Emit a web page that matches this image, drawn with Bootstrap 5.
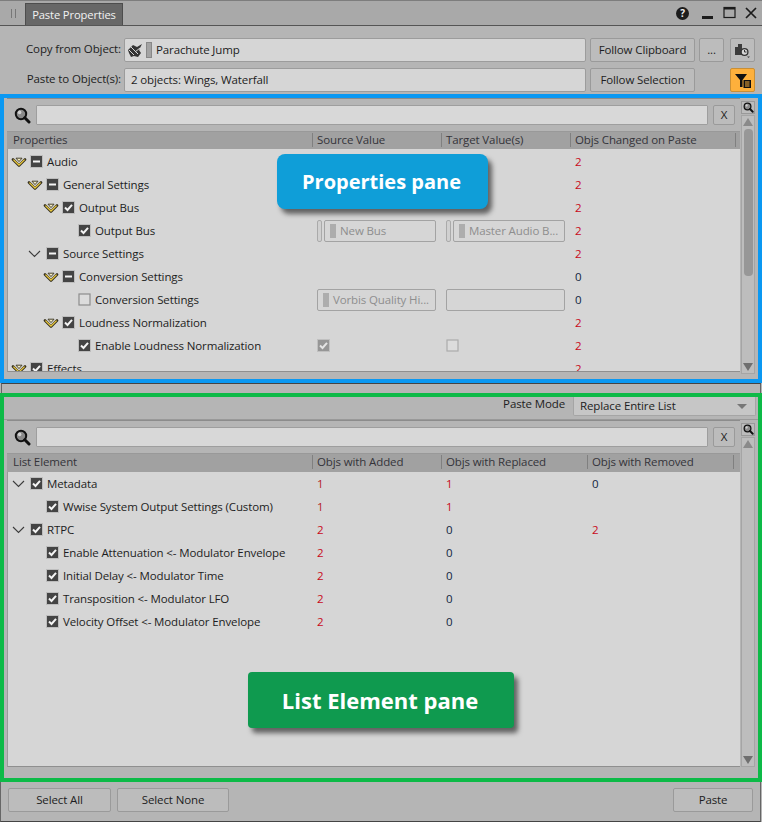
<!DOCTYPE html>
<html lang="en">
<head>
    <meta charset="UTF-8">
    <meta name="viewport" content="width=device-width, initial-scale=1.0">
    <title>Paste Properties</title>
    <link href="https://cdn.jsdelivr.net/npm/bootstrap@5.3.3/dist/css/bootstrap.min.css" rel="stylesheet">
    <style>
        html, body { margin: 0; background: #b5b5b5; }
        body { font-family: "Open Sans", "Liberation Sans", sans-serif; font-size: 11.5px; letter-spacing: -.12px; line-height: 16px; color: #1d1d22; }
        .app-window { width: 762px; height: 822px; overflow: hidden; background: #b5b5b5; }

        /* title bar */
        .title-bar { height: 26px; background: #a9a9a9; border-top: 1px solid #7d7d7d; border-bottom: 1px solid #555; padding-left: 25px; }
        .grip { position: absolute; left: 11px; top: 8px; width: 5px; height: 9px; border-left: 1px solid #777; border-right: 1px solid #777; }
        .title-tab { height: 22px; width: 98px; margin-top: 2px; background: #676767; color: #f2f2f2; border: 1px solid #4d4d4d; border-bottom: 0; font-size: 11.2px; line-height: 21px; text-align: center; }
        .title-icons { margin-left: 553px; padding-top: 4px; }
        .help-dot { width: 13px; height: 13px; border-radius: 50%; background: #1c1c1c; color: #eee; font-size: 10px; font-weight: 700; line-height: 13px; text-align: center; margin-right: 7px; }
        .title-icon { width: 22px; height: 16px; display: block; }

        /* copy / paste header */
        .top-area { height: 68px; padding: 12px 7px 0 0; }
        .top-row { height: 24px; margin-bottom: 6px; }
        .top-label { width: 121px; text-align: right; padding-bottom: 3px; flex: none; }
        .obj-field { width: 462px; height: 24px; margin-left: 3px; background: #d6d6d6; border: 1px solid #9c9c9c; border-radius: 2px; padding-left: 3px; }
        .obj-icon { width: 14px; height: 14px; flex: none; margin-right: 4px; }
        .marker { display: inline-block; flex: none; width: 6px; height: 16px; background: #a3a3a3; border: 1px solid #888; margin-right: 4px; }
        .paste-text { padding-left: 2px; }
        .wb-btn { --bs-btn-padding-x: 0; --bs-btn-padding-y: 0; --bs-btn-font-size: 11.5px; --bs-btn-line-height: 16px; --bs-btn-color: #1d1d22; --bs-btn-bg: #bcbcbc; --bs-btn-border-color: #9a9a9a; --bs-btn-border-radius: 2px; --bs-btn-hover-bg: #c6c6c6; --bs-btn-hover-border-color: #9a9a9a; --bs-btn-hover-color: #1d1d22; letter-spacing: -.12px; }
        .btn-follow { width: 105px; height: 24px; margin-left: 4px; }
        .btn-dots { width: 25px; height: 24px; margin-left: 4px; }
        .btn-tool { width: 25px; height: 24px; margin-left: 6px; }
        .btn-filter { --bs-btn-bg: #fdb03c; --bs-btn-border-color: #c98f35; --bs-btn-hover-bg: #fdb03c; }
        .spacer-dots { width: 29px; }

        /* the two marked panes */
        .pane-frame { border: 4px solid; background: #b5b5b5; }
        .frame-blue { height: 289px; border-color: #0a98f2; }
        .frame-green { height: 389px; border-color: #0dba47; }
        .sash { height: 10px; border-top: 1px solid #444; border-left: 1px solid #666; border-right: 1px solid #666; margin: 0 1px; }
        .pane-inner { padding-left: 3px; }
        .pane-left { width: 733px; flex: none; }
        .pane-right { width: 18px; flex: none; padding: 3px 0 0 1px; }
        .search-row { height: 33px; padding: 6px 5px 0 7px; border-top: 1px solid #8c8c8c; }
        .search-glass { width: 17px; height: 17px; flex: none; margin-top: 2px; }
        .search-box { height: 20px; width: 672px; margin-left: 5px; background: #d8d8d8; border: 1px solid #9e9e9e; border-radius: 1px; flex: none; }
        .btn-clear { width: 22px; height: 20px; margin-left: 5px; line-height: 16px; }
        .mini-search { width: 14px; height: 13px; background: #bcbcbc; border: 1px solid #999; }
        .scroll-track { width: 14px; margin-top: 1px; background: #bdbdbd; border: 1px solid #a5a5a5; padding: 2px 0; }
        .track-props { height: 259px; }
        .arrow-up { width: 0; height: 0; border: 5px solid transparent; border-top: 0; border-bottom: 8px solid #8a8a8a; margin: 0 auto; }
        .arrow-down { width: 0; height: 0; border: 5px solid transparent; border-bottom: 0; border-top: 8px solid #6f6f6f; margin: 0 auto; }
        .scroll-thumb { width: 9px; height: 147px; margin: 3px auto 0; background: #979797; border-radius: 4px; }

        .head-row { height: 18px; background: #a1a1a1; color: #34343a; line-height: 17px; border-top: 1px solid #999; }
        .head-list { height: 19px; }
        .head-row > div { padding-left: 4px; border-right: 1px solid #808080; height: 14px; line-height: 13px; margin-top: 1px; white-space: nowrap; }
        .head-row > div:first-child { padding-left: 6px; }
        .cols-props { display: grid; grid-template-columns: 306px 129px 129px 165px; }
        .cols-list { display: grid; grid-template-columns: 306px 129px 146px 146px; }
        .tree-body { background: #d6d6d6; border-left: 1px solid #9a9a9a; border-bottom: 1px solid #8f8f8f; overflow: hidden; }
        .body-props { height: 223px; padding-top: 1px; }
        .body-list { height: 295px; }
        .tree-row { height: 23px; margin-left: -1px; }
        .tree-row > div { display: flex; align-items: center; padding-left: 4px; min-width: 0; white-space: nowrap; }
        .lvl-1 { margin-left: 16px; }
        .lvl-2 { margin-left: 32px; }
        .lvl-3 { margin-left: 48px; }
        .chev-slot { width: 19px; flex: none; height: 10px; display: block; }
        .chk { width: 13px; height: 13px; flex: none; margin-right: 4px; display: block; }
        .cnt-red { color: #c80a20; }
        .cnt-amber { color: #b5231f; }
        .cnt-navy { color: #10263f; }
        .val-field { height: 22px; border: 1px solid #a3a3a3; border-radius: 2px; color: #8e8e8e; padding-left: 5px; overflow: hidden; }
        .val-wide { width: 119px; }
        .val-short { width: 112px; margin-left: 2px; }
        .val-handle { width: 5px; height: 22px; flex: none; border: 1px solid #aaa; border-radius: 2px; background: linear-gradient(#d0d0d0 48%, #aaa 48%, #aaa 52%, #d0d0d0 52%); }
        .val-mark { width: 6px; height: 14px; flex: none; background: #adadad; margin-right: 4px; }
        .chk-off { width: 13px; height: 13px; display: block; }

        /* paste mode */
        .mode-row { height: 23px; padding-right: 2px; border-bottom: 1px solid #999; }
        .mode-label { margin-top: -1px; }
        .mode-select { width: 183px; height: 19px; margin-left: 8px; background: #c6c6c6; border: 1px solid #a5a5a5; border-top: 0; border-radius: 0 0 2px 2px; padding: 0 8px 0 6px; line-height: 16px; }
        .mode-caret { width: 0; height: 0; border: 5px solid transparent; border-bottom: 0; border-top: 5px solid #777; }

        /* footer */
        .foot-bar { height: 40px; padding: 6px 7px 0 7px; border-bottom: 1px solid #444; border-left: 1px solid #666; border-right: 1px solid #666; margin: 0 1px 0 0; }
        .btn-foot { height: 24px; }
        .w-all { width: 103px; }
        .w-none { width: 112px; margin-left: 6px; }
        .w-paste { width: 80px; }

        /* callouts over the panes */
        .callout { position: absolute; color: #fff; font-weight: 700; letter-spacing: 0; padding-right: 2px; display: flex; align-items: center; justify-content: center; box-shadow: 4px 5px 5px rgba(0, 0, 0, .55); }
        .callout-props { left: 277px; top: 154px; width: 211px; height: 55px; background: #0f9ed8; border-radius: 8px; font-size: 20px; }
        .callout-list { left: 248px; top: 672px; width: 266px; height: 56px; background: #0f9a4f; border-radius: 4px; font-size: 22px; }
    </style>
</head>
<body>
    <!-- icons used in many rows -->
    <svg class="d-none" xmlns="http://www.w3.org/2000/svg">
        <symbol id="ic-gold" viewBox="0 0 19 10">
            <path d="M2 2.5 L8 8.5 L14 2.5" fill="none" stroke="#38321f" stroke-width="2.6" stroke-linejoin="round" stroke-linecap="round"/>
            <path d="M2.4 2.6 L8 8 L13.6 2.6" fill="none" stroke="#e9c93d" stroke-width="1.3"/>
            <path d="M5 1.2 H11 L8 4.6 Z" fill="#f3ecc0" stroke="#38321f" stroke-width=".9" stroke-linejoin="round"/>
        </symbol>
        <symbol id="ic-chev" viewBox="0 0 19 10">
            <path d="M2 2 L7.5 7.5 L13 2" fill="none" stroke="#3c3c3c" stroke-width="1.1"/>
        </symbol>
        <symbol id="ic-check" viewBox="0 0 13 13">
            <rect x=".5" y=".5" width="12" height="12" fill="#444" stroke="#bdbdbd"/>
            <path d="M3 6.5 L5.5 9 L10 3.8" fill="none" stroke="#f4f4f4" stroke-width="2"/>
        </symbol>
        <symbol id="ic-minus" viewBox="0 0 13 13">
            <rect x=".5" y=".5" width="12" height="12" fill="#444" stroke="#bdbdbd"/>
            <rect x="3" y="5.5" width="7" height="2" fill="#f4f4f4"/>
        </symbol>
        <symbol id="ic-empty" viewBox="0 0 13 13">
            <rect x="1" y="1" width="11" height="11" fill="#dcdcdc" stroke="#8c8c8c" stroke-width="1.2"/>
        </symbol>
        <symbol id="ic-glass" viewBox="0 0 17 17">
            <circle cx="7" cy="7" r="5.2" fill="#8a8a8a" stroke="#111" stroke-width="2"/>
            <circle cx="5.6" cy="5.4" r="1.8" fill="#d0d0d0"/>
            <path d="M10.8 10.8 L15 15" stroke="#111" stroke-width="3" stroke-linecap="round"/>
        </symbol>
    </svg>

    <div class="app-window position-relative d-flex flex-column">
        <div class="title-bar d-flex align-items-start position-relative">
            <span class="grip"></span>
            <div class="title-tab flex-none">Paste Properties</div>
            <div class="title-icons d-flex align-items-center">
                <div class="help-dot">?</div>
                <svg class="title-icon" viewBox="0 0 22 16"><rect x="6" y="11" width="11" height="3" fill="#1c1c1c"/></svg>
                <svg class="title-icon" viewBox="0 0 22 16"><rect x="6" y="2.5" width="11" height="10" fill="none" stroke="#1c1c1c" stroke-width="1.2"/><rect x="6" y="2" width="11" height="2.5" fill="#1c1c1c"/></svg>
                <svg class="title-icon" viewBox="0 0 22 16"><path d="M6 3 L16 13 M16 3 L6 13" stroke="#1c1c1c" stroke-width="1.7"/></svg>
            </div>
        </div>

        <div class="top-area">
            <div class="top-row d-flex align-items-center">
                <div class="top-label">Copy from Object:</div>
                <div class="obj-field d-flex align-items-center">
                    <svg class="obj-icon" viewBox="0 0 14 14"><path d="M0 7 L5 2 L9 4 L14 1 L12 5 L11 7 L13 10 L10 14 L6 13 L3 14 L1 10 Z" fill="#333"/><path d="M3 4 L10 11 M1 7 L6 12 M7 9 L12 5" stroke="#d6d6d6" stroke-width="1"/></svg>
                    <span class="marker"></span>
                    <span>Parachute Jump</span>
                </div>
                <button class="btn wb-btn btn-follow" type="button">Follow Clipboard</button>
                <button class="btn wb-btn btn-dots" type="button">...</button>
                <button class="btn wb-btn btn-tool d-flex align-items-center justify-content-center" type="button">
                    <svg width="17" height="17" viewBox="0 0 17 17"><path d="M1 5 L4 5 L4 2 L8 2 L8 13 L1 13 Z" fill="#3c3c3c"/><circle cx="10.5" cy="10" r="3.4" fill="#d8d8d8" stroke="#333" stroke-width="1.3"/><path d="M10.5 8 V10 H12.5" fill="none" stroke="#333"/><path d="M13 14.5 H16 L14.5 16 Z" fill="#444"/></svg>
                </button>
            </div>
            <div class="top-row d-flex align-items-center">
                <div class="top-label">Paste to Object(s):</div>
                <div class="obj-field paste-text d-flex align-items-center"><span class="ps-1">2 objects: Wings, Waterfall</span></div>
                <button class="btn wb-btn btn-follow" type="button">Follow Selection</button>
                <span class="spacer-dots"></span>
                <button class="btn wb-btn btn-tool btn-filter d-flex align-items-center justify-content-center" type="button">
                    <svg width="18" height="17" viewBox="0 0 18 17"><path d="M1 2 H13 L8.5 8 V15 L6 15 V8 Z" fill="#111"/><rect x="9.5" y="8" width="7.5" height="8" fill="#111"/><path d="M11 10 H15.5 M11 12 H15.5 M11 14 H15.5" stroke="#fdb03c"/></svg>
                </button>
            </div>
        </div>

        <!-- Properties pane -->
        <div class="pane-frame frame-blue">
            <div class="pane-inner d-flex">
                <div class="pane-left">
                    <div class="search-row d-flex">
                        <svg class="search-glass" viewBox="0 0 17 17"><use href="#ic-glass"/></svg>
                        <div class="search-box"></div>
                        <button class="btn wb-btn btn-clear" type="button">X</button>
                    </div>
                    <div class="head-row cols-props">
                        <div>Properties</div><div>Source Value</div><div>Target Value(s)</div><div>Objs Changed on Paste</div>
                    </div>
                    <div class="tree-body body-props">
                        <div class="tree-row cols-props">
                            <div><svg class="chev-slot"><use href="#ic-gold"/></svg><svg class="chk"><use href="#ic-minus"/></svg>Audio</div><div></div><div></div><div class="cnt-red">2</div>
                        </div>
                        <div class="tree-row cols-props">
                            <div><svg class="chev-slot lvl-1"><use href="#ic-gold"/></svg><svg class="chk"><use href="#ic-minus"/></svg>General Settings</div><div></div><div></div><div class="cnt-red">2</div>
                        </div>
                        <div class="tree-row cols-props">
                            <div><svg class="chev-slot lvl-2"><use href="#ic-gold"/></svg><svg class="chk"><use href="#ic-check"/></svg>Output Bus</div><div></div><div></div><div class="cnt-red">2</div>
                        </div>
                        <div class="tree-row cols-props">
                            <div><span class="chev-slot lvl-3"></span><svg class="chk"><use href="#ic-check"/></svg>Output Bus</div>
                            <div><span class="val-handle"></span><div class="val-field val-short d-flex align-items-center"><span class="val-mark"></span>New Bus</div></div>
                            <div><span class="val-handle"></span><div class="val-field val-short d-flex align-items-center"><span class="val-mark"></span>Master Audio B...</div></div>
                            <div class="cnt-red">2</div>
                        </div>
                        <div class="tree-row cols-props">
                            <div><svg class="chev-slot lvl-1"><use href="#ic-chev"/></svg><svg class="chk"><use href="#ic-minus"/></svg>Source Settings</div><div></div><div></div><div class="cnt-red">2</div>
                        </div>
                        <div class="tree-row cols-props">
                            <div><svg class="chev-slot lvl-2"><use href="#ic-gold"/></svg><svg class="chk"><use href="#ic-minus"/></svg>Conversion Settings</div><div></div><div></div><div class="cnt-navy">0</div>
                        </div>
                        <div class="tree-row cols-props">
                            <div><span class="chev-slot lvl-3"></span><svg class="chk"><use href="#ic-empty"/></svg>Conversion Settings</div>
                            <div><div class="val-field val-wide d-flex align-items-center"><span class="val-mark"></span>Vorbis Quality Hi...</div></div>
                            <div><div class="val-field val-wide"></div></div>
                            <div class="cnt-navy">0</div>
                        </div>
                        <div class="tree-row cols-props">
                            <div><svg class="chev-slot lvl-2"><use href="#ic-gold"/></svg><svg class="chk"><use href="#ic-check"/></svg>Loudness Normalization</div><div></div><div></div><div class="cnt-red">2</div>
                        </div>
                        <div class="tree-row cols-props">
                            <div><span class="chev-slot lvl-3"></span><svg class="chk"><use href="#ic-check"/></svg>Enable Loudness Normalization</div>
                            <div><svg class="chk-off" viewBox="0 0 13 13"><rect x=".5" y=".5" width="12" height="12" fill="#969696" stroke="#c0c0c0"/><path d="M3 6.5 L5.5 9 L10 3.8" fill="none" stroke="#e4e4e4" stroke-width="2"/></svg></div>
                            <div><svg class="chk-off" viewBox="0 0 13 13"><rect x="1" y="1" width="11" height="11" fill="#dcdcdc" stroke="#ababab" stroke-width="1.2"/></svg></div>
                            <div class="cnt-red">2</div>
                        </div>
                        <div class="tree-row cols-props">
                            <div><svg class="chev-slot"><use href="#ic-gold"/></svg><svg class="chk"><use href="#ic-check"/></svg>Effects</div><div></div><div></div><div class="cnt-red">2</div>
                        </div>
                    </div>
                </div>
                <div class="pane-right d-flex flex-column">
                    <div class="mini-search d-flex align-items-center justify-content-center"><svg width="11" height="11" viewBox="0 0 17 17"><use href="#ic-glass"/></svg></div>
                    <div class="scroll-track track-props d-flex flex-column">
                        <div class="arrow-up"></div>
                        <div class="scroll-thumb"></div>
                        <div class="arrow-down mt-auto"></div>
                    </div>
                </div>
            </div>
        </div>

        <div class="sash"></div>

        <!-- List Element pane -->
        <div class="pane-frame frame-green">
            <div class="mode-row d-flex justify-content-end align-items-start">
                <div class="mode-label">Paste Mode</div>
                <div class="mode-select d-flex align-items-center justify-content-between"><span>Replace Entire List</span><span class="mode-caret"></span></div>
            </div>
            <div class="pane-inner d-flex">
                <div class="pane-left">
                    <div class="search-row d-flex">
                        <svg class="search-glass" viewBox="0 0 17 17"><use href="#ic-glass"/></svg>
                        <div class="search-box"></div>
                        <button class="btn wb-btn btn-clear" type="button">X</button>
                    </div>
                    <div class="head-row head-list cols-list">
                        <div>List Element</div><div>Objs with Added</div><div>Objs with Replaced</div><div>Objs with Removed</div>
                    </div>
                    <div class="tree-body body-list">
                        <div class="tree-row cols-list">
                            <div><svg class="chev-slot"><use href="#ic-chev"/></svg><svg class="chk"><use href="#ic-check"/></svg>Metadata</div><div class="cnt-amber">1</div><div class="cnt-red">1</div><div class="cnt-navy">0</div>
                        </div>
                        <div class="tree-row cols-list">
                            <div><span class="chev-slot lvl-1"></span><svg class="chk"><use href="#ic-check"/></svg>Wwise System Output Settings (Custom)</div><div class="cnt-amber">1</div><div class="cnt-red">1</div><div></div>
                        </div>
                        <div class="tree-row cols-list">
                            <div><svg class="chev-slot"><use href="#ic-chev"/></svg><svg class="chk"><use href="#ic-check"/></svg>RTPC</div><div class="cnt-red">2</div><div class="cnt-navy">0</div><div class="cnt-red">2</div>
                        </div>
                        <div class="tree-row cols-list">
                            <div><span class="chev-slot lvl-1"></span><svg class="chk"><use href="#ic-check"/></svg>Enable Attenuation &lt;- Modulator Envelope</div><div class="cnt-red">2</div><div class="cnt-navy">0</div><div></div>
                        </div>
                        <div class="tree-row cols-list">
                            <div><span class="chev-slot lvl-1"></span><svg class="chk"><use href="#ic-check"/></svg>Initial Delay &lt;- Modulator Time</div><div class="cnt-red">2</div><div class="cnt-navy">0</div><div></div>
                        </div>
                        <div class="tree-row cols-list">
                            <div><span class="chev-slot lvl-1"></span><svg class="chk"><use href="#ic-check"/></svg>Transposition &lt;- Modulator LFO</div><div class="cnt-red">2</div><div class="cnt-navy">0</div><div></div>
                        </div>
                        <div class="tree-row cols-list">
                            <div><span class="chev-slot lvl-1"></span><svg class="chk"><use href="#ic-check"/></svg>Velocity Offset &lt;- Modulator Envelope</div><div class="cnt-red">2</div><div class="cnt-navy">0</div><div></div>
                        </div>
                    </div>
                </div>
                <div class="pane-right d-flex flex-column">
                    <div class="mini-search d-flex align-items-center justify-content-center"><svg width="11" height="11" viewBox="0 0 17 17"><use href="#ic-glass"/></svg></div>
                    <div class="scroll-track flex-grow-1 d-flex flex-column">
                        <div class="arrow-up"></div>
                        <div class="arrow-down mt-auto"></div>
                    </div>
                </div>
            </div>
        </div>

        <div class="foot-bar d-flex">
            <button class="btn wb-btn btn-foot w-all" type="button">Select All</button>
            <button class="btn wb-btn btn-foot w-none" type="button">Select None</button>
            <button class="btn wb-btn btn-foot w-paste ms-auto" type="button">Paste</button>
        </div>

        <div class="callout callout-props">Properties pane</div>
        <div class="callout callout-list">List Element pane</div>
    </div>

    <script src="https://cdn.jsdelivr.net/npm/bootstrap@5.3.3/dist/js/bootstrap.bundle.min.js"></script>
</body>
</html>
